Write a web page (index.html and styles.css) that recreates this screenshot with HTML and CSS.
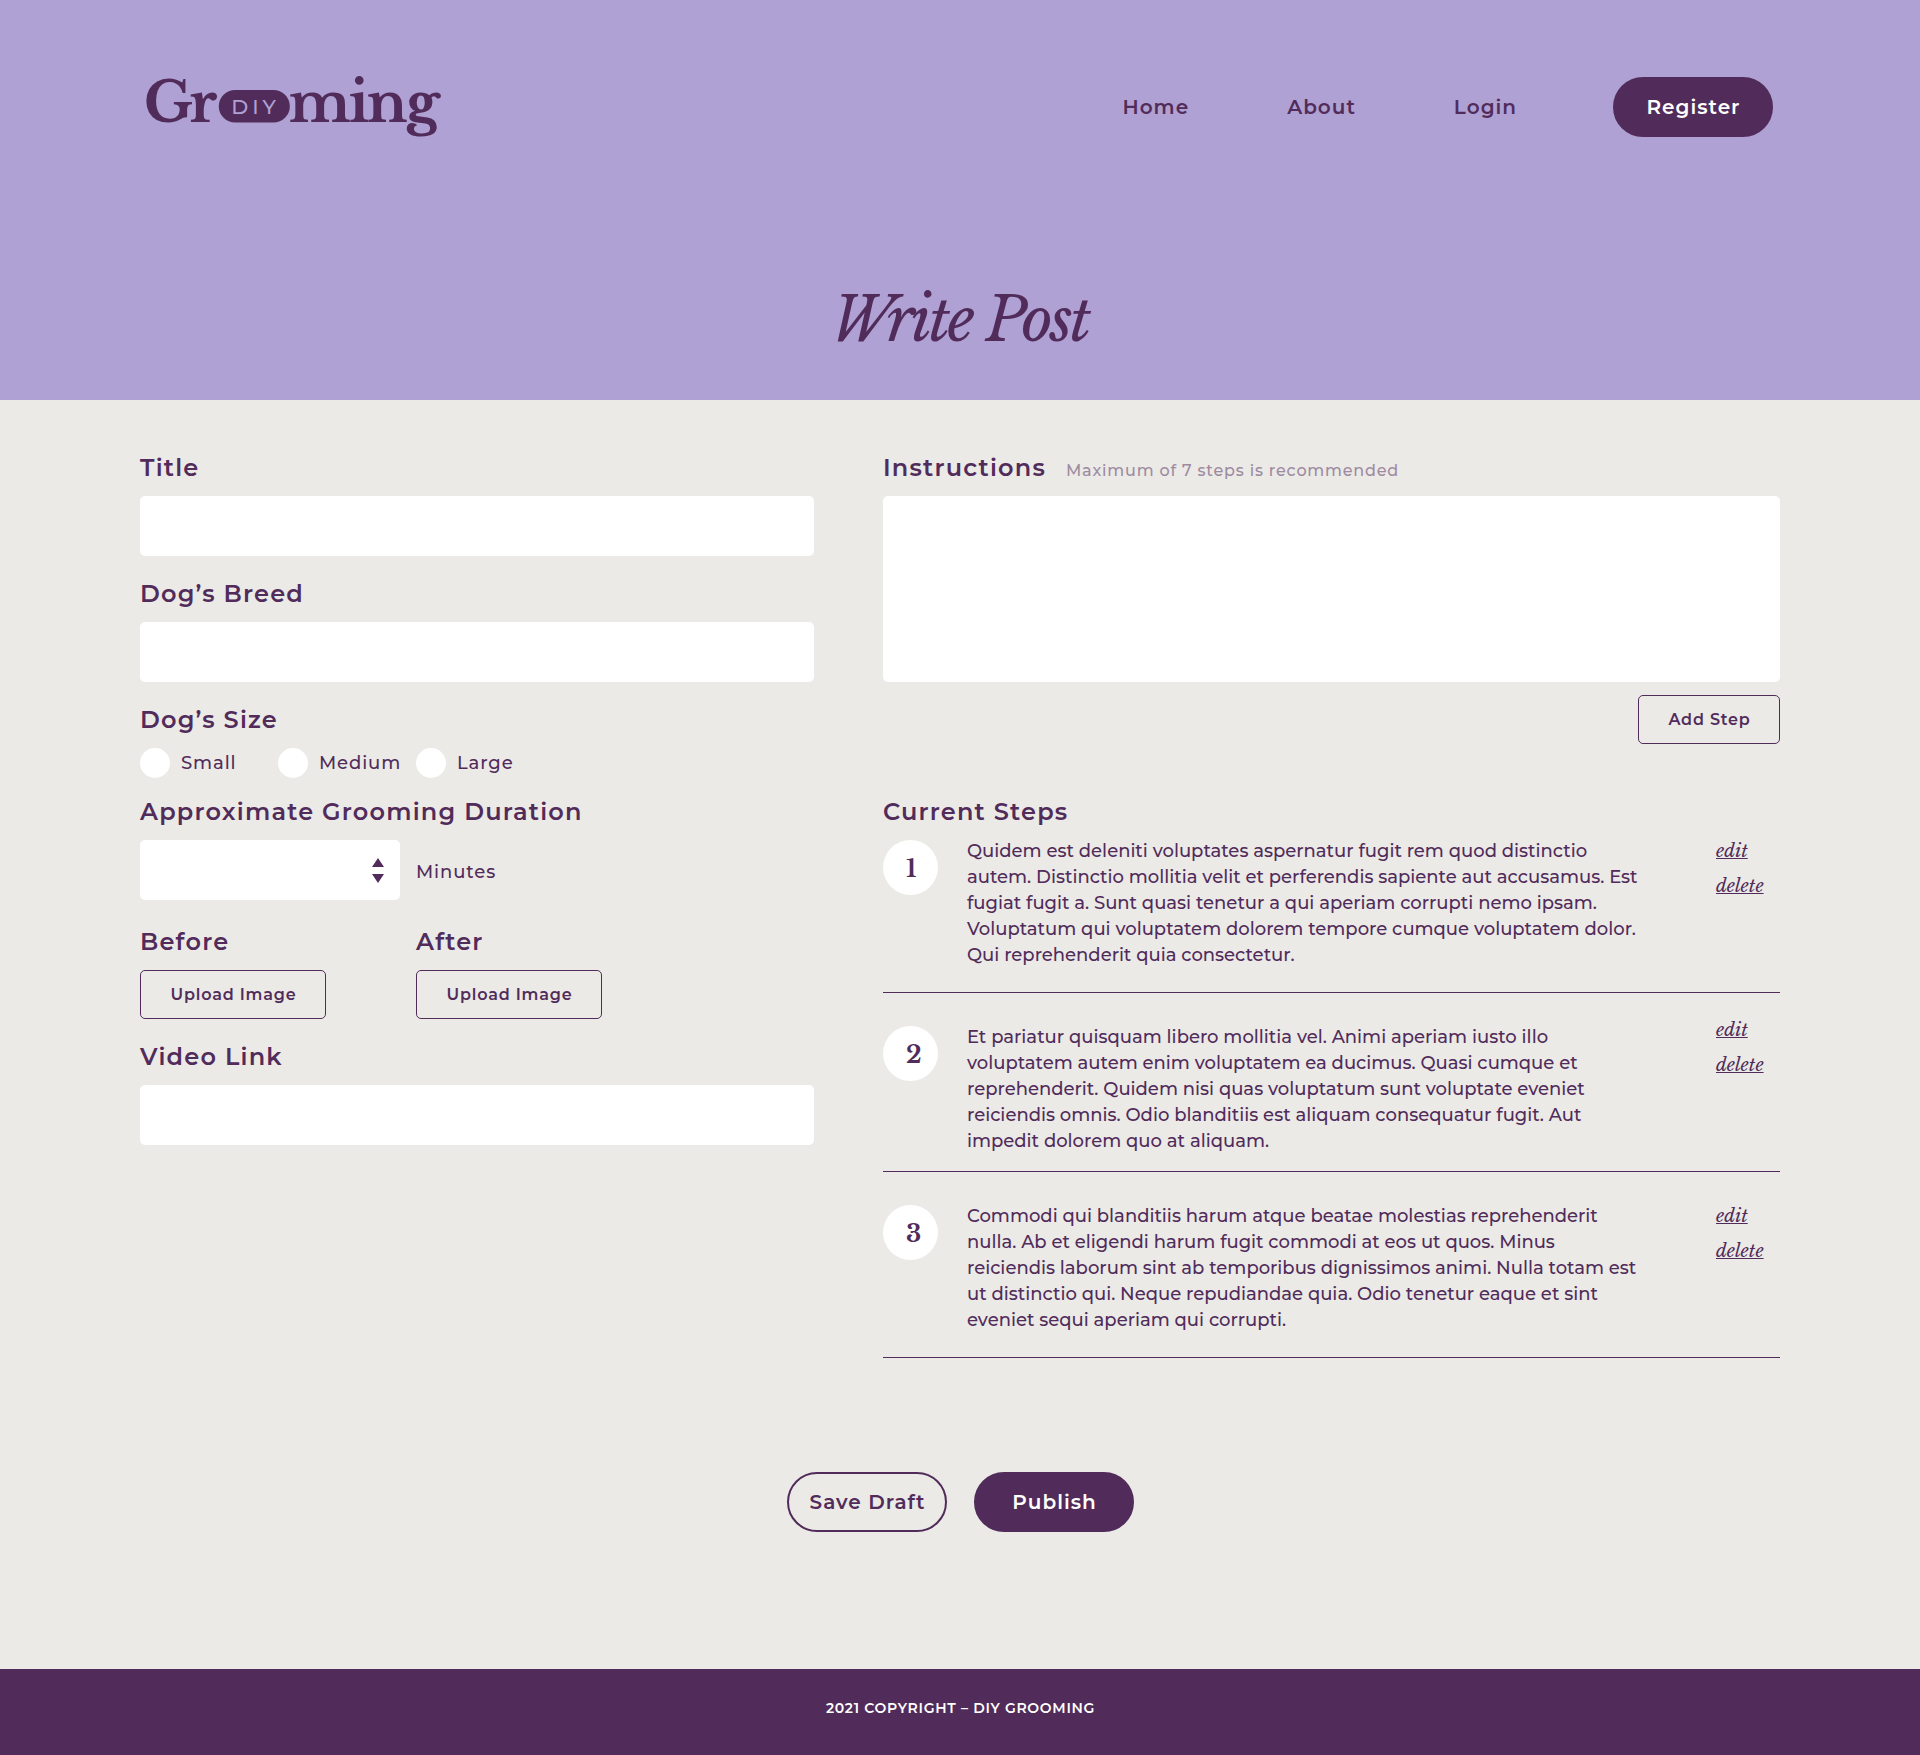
FILE: index.html
```html
<!DOCTYPE html>
<html lang="en">
<head>
<meta charset="utf-8">
<title>Write Post – DIY Grooming</title>
<link rel="stylesheet" href="styles.css">
</head>
<body>
<header class="header">
  <div class="topbar">
    <a class="logo" href="#">
      <svg width="306" height="80" viewBox="0 0 306 80" role="img" aria-label="DIY Grooming">
        <text class="logo-word" x="3.8" y="55" textLength="73.4">Gr</text>
        <rect class="logo-pill" x="78.8" y="23" width="71" height="32.6" rx="16.3"/>
        <text class="logo-diy" x="91.2" y="46.6">DIY</text>
        <text class="logo-word" x="148.8" y="55" textLength="150.8">ming</text>
      </svg>
    </a>
    <nav class="nav">
      <a class="nav-link" href="#">Home</a>
      <a class="nav-link" href="#">About</a>
      <a class="nav-link" href="#">Login</a>
      <a class="pill pill-solid" href="#">Register</a>
    </nav>
  </div>
  <h1 class="page-title">Write Post</h1>
</header>

<main>
  <form class="post-form">
    <div class="columns">
      <div class="details">
        <div class="field">
          <label class="label" for="title">Title</label>
          <input class="input" id="title" type="text">
        </div>
        <div class="field">
          <label class="label" for="breed">Dog’s Breed</label>
          <input class="input" id="breed" type="text">
        </div>
        <div class="field sizes">
          <span class="label">Dog’s Size</span>
          <div class="size-options">
            <label class="option"><input class="radio" type="radio" name="size">Small</label>
            <label class="option"><input class="radio" type="radio" name="size">Medium</label>
            <label class="option"><input class="radio" type="radio" name="size">Large</label>
          </div>
        </div>
        <div class="field duration">
          <span class="label">Approximate Grooming Duration</span>
          <div class="duration-row">
            <div class="stepper">
              <svg width="12" height="25" viewBox="0 0 12 25"><path d="M6 0l6 9H0zM0 16h12l-6 9z"/></svg>
            </div>
            <span class="unit">Minutes</span>
          </div>
        </div>
        <div class="field uploads">
          <div class="upload">
            <span class="label">Before</span>
            <button class="button" type="button">Upload Image</button>
          </div>
          <div class="upload">
            <span class="label">After</span>
            <button class="button" type="button">Upload Image</button>
          </div>
        </div>
        <div class="field">
          <label class="label" for="video">Video Link</label>
          <input class="input" id="video" type="text">
        </div>
      </div>

      <div class="instructions">
        <div class="label-row">
          <label class="label" for="instructions">Instructions</label>
          <span class="hint">Maximum of 7 steps is recommended</span>
        </div>
        <textarea class="input textarea" id="instructions"></textarea>
        <button class="button add-step" type="button">Add Step</button>
        <h2 class="label steps-title">Current Steps</h2>
        <ol class="steps">
          <li class="step">
            <span class="number">1</span>
            <p class="step-text">Quidem est deleniti voluptates aspernatur fugit rem quod distinctio autem. Distinctio mollitia velit et perferendis sapiente aut accusamus. Est fugiat fugit a. Sunt quasi tenetur a qui aperiam corrupti nemo ipsam. Voluptatum qui voluptatem dolorem tempore cumque voluptatem dolor. Qui reprehenderit quia consectetur.</p>
            <div class="actions"><a href="#">edit</a><a href="#">delete</a></div>
          </li>
          <li class="step step-tight">
            <span class="number">2</span>
            <p class="step-text">Et pariatur quisquam libero mollitia vel. Animi aperiam iusto illo voluptatem autem enim voluptatem ea ducimus. Quasi cumque et reprehenderit. Quidem nisi quas voluptatum sunt voluptate eveniet reiciendis omnis. Odio blanditiis est aliquam consequatur fugit. Aut impedit dolorem quo at aliquam.</p>
            <div class="actions"><a href="#">edit</a><a href="#">delete</a></div>
          </li>
          <li class="step">
            <span class="number">3</span>
            <p class="step-text">Commodi qui blanditiis harum atque beatae molestias reprehenderit nulla. Ab et eligendi harum fugit commodi at eos ut quos. Minus reiciendis laborum sint ab temporibus dignissimos animi. Nulla totam est ut distinctio qui. Neque repudiandae quia. Odio tenetur eaque et sint eveniet sequi aperiam qui corrupti.</p>
            <div class="actions"><a href="#">edit</a><a href="#">delete</a></div>
          </li>
        </ol>
      </div>
    </div>
    <div class="submit-row">
      <button class="pill pill-outline" type="button">Save Draft</button>
      <button class="pill pill-solid" type="submit">Publish</button>
    </div>
  </form>
</main>

<footer class="footer">2021 COPYRIGHT – DIY GROOMING</footer>
</body>
</html>
```
FILE: styles.css
```css
:root {
  --plum: #512c5b;
  --lavender: #afa1d3;
  --paper: #ebeae6;
  --sans: Montserrat, Inter, sans-serif;
  --serif: "Libre Baskerville", "Liberation Serif", serif;
}

* { box-sizing: border-box; }

body {
  margin: 0;
  background: var(--paper);
  color: var(--plum);
  font: 500 18px/26px var(--sans);
}

a { color: inherit; }

/* Header */
.header {
  height: 400px;
  padding-top: 67px;
  background: var(--lavender);
}
.topbar {
  display: flex;
  justify-content: space-between;
  align-items: center;
  height: 80px;
  padding: 0 147px 0 140px;
}
.logo svg { display: block; }
.logo-word { font: 700 56px var(--serif); fill: var(--plum); }
.logo-pill { fill: var(--plum); }
.logo-diy {
  font: 500 20.5px var(--sans);
  letter-spacing: 4.2px;
  fill: var(--lavender);
}
.nav { display: flex; align-items: center; gap: 98px; }
.nav .pill { margin-left: -2px; }
.nav-link {
  font-size: 20px;
  font-weight: 600;
  letter-spacing: .05em;
  text-decoration: none;
}
.page-title {
  margin: 143px 0 0;
  font: italic 400 60px/60px var(--serif);
  letter-spacing: -.05em;
  text-align: center;
}

/* Buttons */
.pill {
  display: flex;
  align-items: center;
  justify-content: center;
  width: 160px;
  height: 60px;
  padding: 0 0 0 1px;
  border: 2px solid var(--plum);
  border-radius: 30px;
  font: 600 20px/26px var(--sans);
  letter-spacing: .05em;
  text-decoration: none;
}
.pill-solid { background: var(--plum); color: #fff; }
.pill-outline { background: none; color: var(--plum); }
.button {
  display: block;
  width: 186px;
  height: 49px;
  padding: 0 0 0 1px;
  border: 1px solid var(--plum);
  border-radius: 5px;
  background: none;
  color: var(--plum);
  font: 600 16px/20px var(--sans);
  letter-spacing: .05em;
}

/* Form */
.post-form { padding-top: 53px; }
.columns {
  display: grid;
  grid-template-columns: 674px 897px;
  column-gap: 69px;
  padding: 0 140px;
}
.details { display: flex; flex-direction: column; gap: 23px; }
.label {
  display: block;
  margin: 0 0 14px;
  font-size: 24px;
  font-weight: 600;
  line-height: 29px;
  letter-spacing: .05em;
}
.input {
  display: block;
  width: 100%;
  height: 60px;
  padding: 0 16px;
  border: 0;
  border-radius: 5px;
  background: #fff;
  color: inherit;
  font: inherit;
}
.size-options { display: flex; }
.option {
  display: flex;
  align-items: center;
  gap: 11px;
  width: 138px;
  height: 30px;
  letter-spacing: .05em;
}
.radio {
  flex: none;
  width: 30px;
  height: 30px;
  margin: 0;
  border-radius: 50%;
  background: #fff;
  appearance: none;
}
.duration { margin-top: -4px; }
.duration-row { display: flex; align-items: center; gap: 16px; }
.stepper {
  display: flex;
  align-items: center;
  justify-content: flex-end;
  width: 260px;
  height: 60px;
  padding-right: 16px;
  border-radius: 5px;
  background: #fff;
}
.stepper svg { fill: var(--plum); }
.unit { padding-top: 3px; letter-spacing: .05em; }
.uploads { display: flex; gap: 90px; margin-top: 4px; }

/* Instructions */
.label-row { display: flex; align-items: baseline; gap: 20px; }
.hint {
  color: #9e8ba1;
  font-size: 16px;
  line-height: 20px;
  letter-spacing: .05em;
}
.textarea { height: 186px; padding: 16px; resize: none; }
.add-step { width: 142px; margin: 13px 0 53px auto; }
.steps-title { margin-bottom: 12px; }
.steps { margin: 0; padding: 0; list-style: none; }
.step {
  display: grid;
  grid-template-columns: 84px 676px 63px;
  align-items: start;
  padding: 31px 0 24px;
  border-bottom: 1px solid var(--plum);
}
.step:first-child { padding-top: 0; }
.number {
  width: 55px;
  height: 55px;
  margin-top: 2px;
  padding-left: 23px;
  border-radius: 50%;
  background: #fff;
  font: 700 24px/57px var(--serif);
}
.step-text { margin: 0; }
.actions {
  display: flex;
  flex-direction: column;
  align-items: flex-start;
  margin: -4px 0 0 73px;
  font: italic 400 18px/35px var(--serif);
}
.step-tight { padding-bottom: 17px; }
.step-tight .actions { margin-top: -11px; }

.submit-row {
  display: flex;
  justify-content: center;
  gap: 27px;
  padding: 114px 0 137px 1px;
}

.footer {
  height: 86px;
  padding: 29px 0 0 1px;
  background: var(--plum);
  color: #fff;
  font-size: 14px;
  font-weight: 600;
  line-height: 20px;
  letter-spacing: .05em;
  text-align: center;
}
```
